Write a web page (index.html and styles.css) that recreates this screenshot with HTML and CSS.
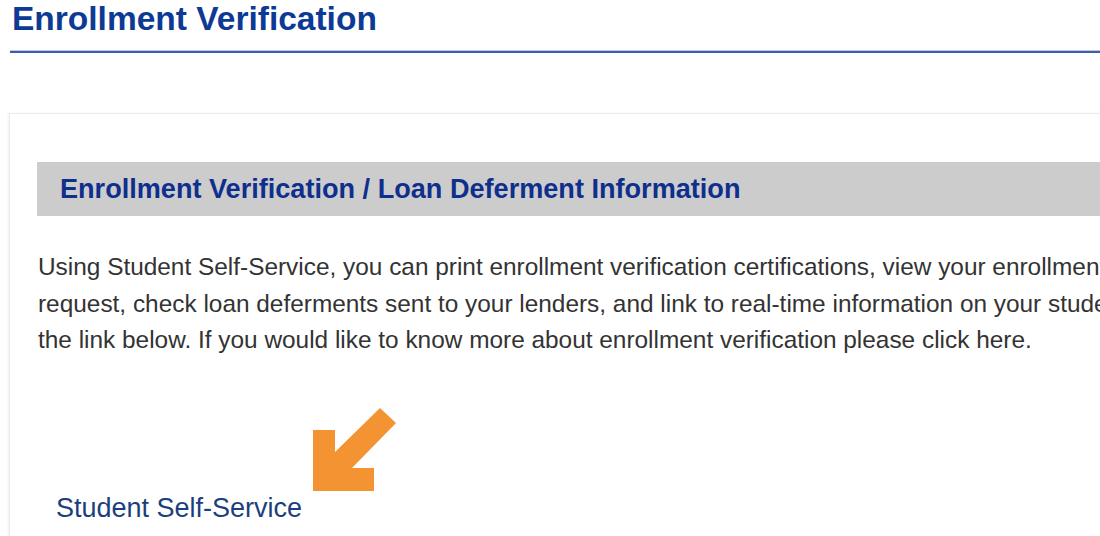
FILE: index.html
```html
<!DOCTYPE html>
<html>
<head>
<meta charset="utf-8">
<link rel="stylesheet" href="styles.css">
<title>Enrollment Verification</title>
</head>
<body>
<div class="page">
  <h1 class="title">Enrollment Verification</h1>
  <div class="rule"></div>
  <div class="card">
    <h2 class="section-head">Enrollment Verification / Loan Deferment Information</h2>
    <p class="intro">
      <span class="ln">Using Student Self-Service, you can print enrollment verification certifications, view your enrollment history, order an enrollment</span>
      <span class="ln">request, check loan deferments sent to your lenders, and link to real-time information on your student loans by clicking on</span>
      <span class="ln">the link below. If you would like to know more about enrollment verification please click <a class="plain" href="#">here</a>.</span>
    </p>
    <div class="link-row">
      <a class="ssl" href="#">Student Self-Service</a>
    </div>
    <svg class="arrow" width="83" height="83" viewBox="0 0 83 83" aria-hidden="true">
      <polygon points="0,22 22,22 22,44 67,0 83,15 39,60 61,60 61,83 0,83" fill="#f39332"/>
    </svg>
  </div>
</div>
</body>
</html>
```
FILE: styles.css
```css
html, body {
  margin: 0;
  padding: 0;
  background: #ffffff;
  overflow: hidden;
}
body {
  width: 1100px;
  height: 536px;
  font-family: "Liberation Sans", Arial, sans-serif;
}
.page {
  width: 1400px;
}
.title {
  margin: 0;
  padding: 2px 0 0 12px;
  font-size: 33.5px;
  line-height: 34px;
  font-weight: bold;
  color: #0d3a94;
}
.rule {
  margin: 14px 0 0 10px;
  border-top: 1px solid #c9c9c9;
  border-bottom: 2px solid #3a5cb6;
  height: 0;
}
.card {
  position: relative;
  margin: 60px 0 0 9px;
  border: 1px solid #ececec;
  box-shadow: -1px 0 2px rgba(0,0,0,0.06);
  padding: 48px 0 60px 27px;
}
.section-head {
  margin: 0;
  height: 54px;
  line-height: 54px;
  background: #cccccc;
  padding-left: 23px;
  font-size: 27.1px;
  font-weight: bold;
  color: #0f2f8c;
}
.intro {
  margin: 33px 0 0 0;
  padding-left: 1px;
  font-size: 24.4px;
  line-height: 36.6px;
  color: #333333;
}
.ln {
  display: block;
  white-space: nowrap;
}
.plain {
  color: #333333;
  text-decoration: none;
}
.link-row {
  margin-top: 131px;
  padding-left: 19px;
  font-size: 27px;
  line-height: 36px;
}
.ssl {
  color: #1b3f7e;
  text-decoration: none;
}
.arrow {
  position: absolute;
  left: 303px;
  top: 294px;
}
```
